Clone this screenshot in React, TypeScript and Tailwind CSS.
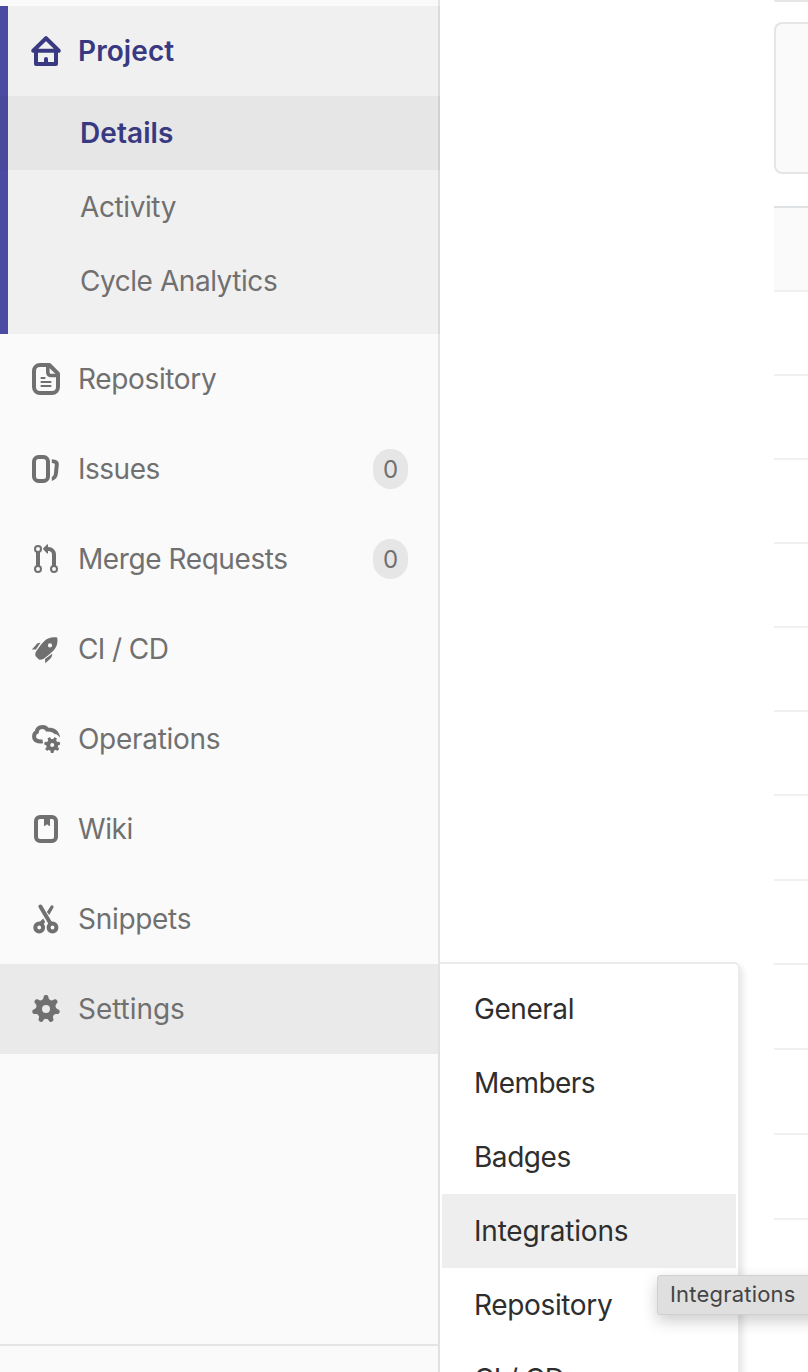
import type { ReactNode } from "react";

function Icon({ children }: { children: ReactNode }) {
  return (
    <svg viewBox="0 0 32 32" className="h-8 w-8 shrink-0" fill="none" stroke="currentColor" strokeWidth="4" aria-hidden="true">
      {children}
    </svg>
  );
}

const HomeIcon = () => (
  <Icon>
    <path d="M3.2 15.8 16 3.2l12.8 12.6zM6 16v13h20V16" strokeLinejoin="round" strokeLinecap="round" strokeWidth="4" />
    <path d="M14 29v-5a2 2 0 0 1 4 0v5z" fill="currentColor" stroke="none" />
  </Icon>
);

const DocumentIcon = () => (
  <Icon>
    <path d="M10 2h9.3L28 10.7V24a6 6 0 0 1-6 6H10a6 6 0 0 1-6-6V8a6 6 0 0 1 6-6z" strokeLinejoin="round" />
    <path d="M17.8 3v6.500a3 3 0 0 0 3 3H28" strokeWidth="3.6" />
    <path d="M11.4 15h3.2M11.4 19h9.2M11.4 23h9.2" strokeWidth="2" strokeLinecap="round" />
  </Icon>
);

const IssuesIcon = () => (
  <Icon>
    <rect x="4" y="4" width="14" height="24" rx="4.5" />
    <path d="M21.8 6.2c5 .3 7.2 1.9 7 5.300l-.8 8.600c-.4 4.300-2.500 6.900-6.200 7.800v-4c1.600-.7 2-2 2.200-4l.8-8.300c.1-1-.6-1.400-3-1.600z" fill="currentColor" stroke="none" />
  </Icon>
);

const MergeIcon = () => (
  <Icon>
    <g strokeWidth="2">
      <circle cx="8" cy="6" r="3" />
      <circle cx="8" cy="26" r="3" />
      <circle cx="24" cy="26" r="3" />
    </g>
    <path d="M8 9v14M17 6h1.500A5.500 5.500 0 0 1 24 11.500V23" />
    <path d="M12.800 5.800 17 1.400c.5-.4 1-.2 1 .5v8c0 .7-.5.9-1 .5z" fill="currentColor" stroke="none" />
  </Icon>
);

const RocketIcon = () => (
  <Icon>
    <g fill="currentColor" stroke="none">
      <path fillRule="evenodd" d="M27.200 4.500c.8 4.700-.2 9.500-3.600 12.900-3 3-6.300 5.800-9.500 8.200-1.500 1.100-3.600 1.600-5.200.8l-3.200-3.200c-.9-1.500-.3-3.700.7-5.200 2.400-3.500 5-7 8-10C17.800 4.600 22.500 3.700 27.200 4.500zM20 10.300a2.100 2.100 0 1 0 0 4.200 2.100 2.100 0 0 0 0-4.200z" />
      <path d="M10.500 9.800c-2-.2-3.400.5-4.600 2.100L1.900 16.600l4-.2z" />
      <path d="M22.200 20.800c.1 2-.6 3.700-2.200 5.200L15.300 30.200l-.3-4.100z" />
    </g>
  </Icon>
);

const GEAR_TEETH = [0, 51.43, 102.86, 154.29, 205.71, 257.14, 308.57];

const OperationsIcon = () => (
  <Icon>
    <path d="M12.700 18.200c-4.700.9-8.600-.8-8.600-4.800 0-2.200 1-3.700 2.700-4.400C7.200 6 9.500 4.100 12.400 4.100c2.200 0 3.900.9 4.900 2.500 4.300-.1 7.300 1.200 9.200 3.600" />
    <path d="M23.500 5.800c3.500 1.300 6.200 4.300 6.600 8.800-2.400-2.600-4.900-4.200-7.600-5z" fill="currentColor" stroke="none" />
    <g transform="translate(22.200 21.900)">
      <circle r="4" strokeWidth="4" />
      {GEAR_TEETH.map((a) => (
        <rect key={a} x="-1.600" y="-8" width="3.200" height="4" rx="1" transform={`rotate(${a + 25.7})`} fill="currentColor" stroke="none" />
      ))}
    </g>
  </Icon>
);

const WikiIcon = () => (
  <Icon>
    <rect x="6" y="4" width="20" height="24" rx="4" />
    <path d="M14 4h6v8.600c0 .5-.5.600-.8.300L17 11.200l-2.200 1.700c-.4.300-.8.100-.8-.3z" fill="currentColor" stroke="none" />
  </Icon>
);

const SnippetsIcon = () => (
  <Icon>
    <circle cx="9.200" cy="24.500" r="3.900" />
    <circle cx="22.500" cy="24.500" r="3.900" />
    <path d="M10.400 3.500 20.500 20.500" strokeLinecap="round" />
    <path d="M20.700 3.100c.8-1.300 2.500-.7 2.800.5.100.7-.1 1.200-.4 1.700l-3.900 6.600-2.300-2.900zM13.200 15.600l2 3.400-3.200 4-4-2.500z" fill="currentColor" stroke="none" />
  </Icon>
);

const SettingsIcon = () => (
  <Icon>
    <g transform="translate(16 16)">
      <circle r="7" strokeWidth="6" />
      {GEAR_TEETH.map((a) => (
        <path key={a} d="M-4.200-8.500C-2.700-9.500-2.500-11-2.200-12.700c.5-1.700 3.900-1.700 4.400 0 .3 1.700.5 3.200 2 4.200z" transform={`rotate(${a})`} fill="currentColor" stroke="none" />
      ))}
    </g>
  </Icon>
);

interface NavItem {
  label: string;
  icon: ReactNode;
  tracking: string;
  count?: number;
  active?: boolean;
}

const NAV: NavItem[] = [
  { label: "Repository", icon: <DocumentIcon />, tracking: "tracking-[-0.35px]" },
  { label: "Issues", icon: <IssuesIcon />, tracking: "tracking-[-0.5px]", count: 0 },
  { label: "Merge Requests", icon: <MergeIcon />, tracking: "tracking-[-0.42px]", count: 0 },
  { label: "CI / CD", icon: <RocketIcon />, tracking: "tracking-[-0.6px]" },
  { label: "Operations", icon: <OperationsIcon />, tracking: "tracking-[-0.3px]" },
  { label: "Wiki", icon: <WikiIcon />, tracking: "tracking-[-0.4px]" },
  { label: "Snippets", icon: <SnippetsIcon />, tracking: "tracking-[-0.3px]" },
  { label: "Settings", icon: <SettingsIcon />, tracking: "tracking-[-0.05px]", active: true },
];

const MENU = [
  { label: "General", tracking: "tracking-[-0.45px]" },
  { label: "Members", tracking: "tracking-[-0.55px]" },
  { label: "Badges", tracking: "tracking-[-0.45px]" },
  { label: "Integrations", tracking: "tracking-[-0.2px]", active: true },
  { label: "Repository", tracking: "tracking-[-0.35px]" },
  { label: "CI / CD", tracking: "tracking-[-0.6px]" },
];

const ROWS = ["h-[84px]", "h-[84px]", "h-[84px]", "h-[84px]", "h-[84px]", "h-[84px]", "h-[85px]", "h-[84px]", "h-[85px]", "h-[85px]", "h-[85px]"];

function Sidebar() {
  return (
    <aside className="flex w-[440px] shrink-0 flex-col border-r-2 border-[#e4e4e4] bg-[#fafafa] pt-[6px] text-[#707070]">
      <section className="-mr-[2px] h-[328px] shrink-0 border-l-8 border-r-2 border-l-[#4b4ba3] border-r-[#dadada] bg-[#f0f0f0]">
        <a className="flex h-[90px] items-center gap-4 pl-[22px] font-semibold tracking-[0.08px] text-[#393982]">
          <HomeIcon />
          <span>Project</span>
        </a>
        <a className="-ml-2 -mr-[2px] flex h-[74px] items-center bg-black/4 pl-20 font-semibold tracking-[0.08px] text-[#393982]">Details</a>
        <a className="flex h-[74px] items-center pl-[72px] tracking-[-0.4px]">Activity</a>
        <a className="flex h-[74px] items-center pl-[72px] tracking-[-0.45px]">Cycle Analytics</a>
      </section>
      <nav>
        {NAV.map((item) => (
          <a key={item.label} className={`flex h-[90px] items-center gap-4 pl-[30px] pr-[30px] ${item.active ? "bg-[#eaeaea]" : ""}`}>
            {item.icon}
            <span className={item.tracking}>{item.label}</span>
            {item.count !== undefined && (
              <span className="ml-auto flex h-10 w-[35px] items-center justify-center rounded-full bg-[#e6e6e6] pt-0.5 text-2xl">{item.count}</span>
            )}
          </a>
        ))}
      </nav>
      <footer className="mt-auto h-7 border-t-2 border-[#e4e4e4]" />
    </aside>
  );
}

function Content() {
  return (
    <main className="flex flex-1 flex-col pl-[334px]">
      <div className="h-[2px] shrink-0 rounded-bl-lg bg-[#e5e5e5]" />
      <div className="mt-5 h-[152px] shrink-0 rounded-l-lg border-2 border-r-0 border-[#e5e5e5] bg-[#fafafa]" />
      <div className="mt-8 h-[86px] shrink-0 border-b-2 border-t-2 border-b-[#f0f0f0] border-t-[#dfe2e5] bg-[#fafafa]" />
      {ROWS.map((height, i) => (
        <div key={i} className={`shrink-0 border-b-2 border-[#f0f0f0] ${height}`} />
      ))}
    </main>
  );
}

export default function App() {
  return (
    <div className="relative flex h-[1372px] w-[808px] overflow-hidden bg-white font-['Inter',sans-serif] text-[28px] leading-none">
      <Sidebar />
      <Content />
      <div className="absolute left-[440px] top-[962px] w-[300px] rounded-tr-md border-2 border-l-0 border-[#ebebeb] bg-white px-[2px] pt-2 text-[#2e2e2e] shadow-[3px_4px_6px_rgba(0,0,0,0.1)]">
        {MENU.map((item) => (
          <a key={item.label} className={`flex h-[74px] items-center pl-8 ${item.tracking} ${item.active ? "bg-[#eeeeee]" : ""}`}>
            {item.label}
          </a>
        ))}
      </div>
      <div className="absolute left-[657px] top-[1275px] flex h-10 w-[170px] items-center rounded-[3px] border border-[#d0d0d0] bg-[#dfdfdf] pb-0.5 pl-3 text-[22px] tracking-[0.2px] text-[#444444] shadow-[0_6px_16px_rgba(0,0,0,0.2)]">
        Integrations
      </div>
    </div>
  );
}
